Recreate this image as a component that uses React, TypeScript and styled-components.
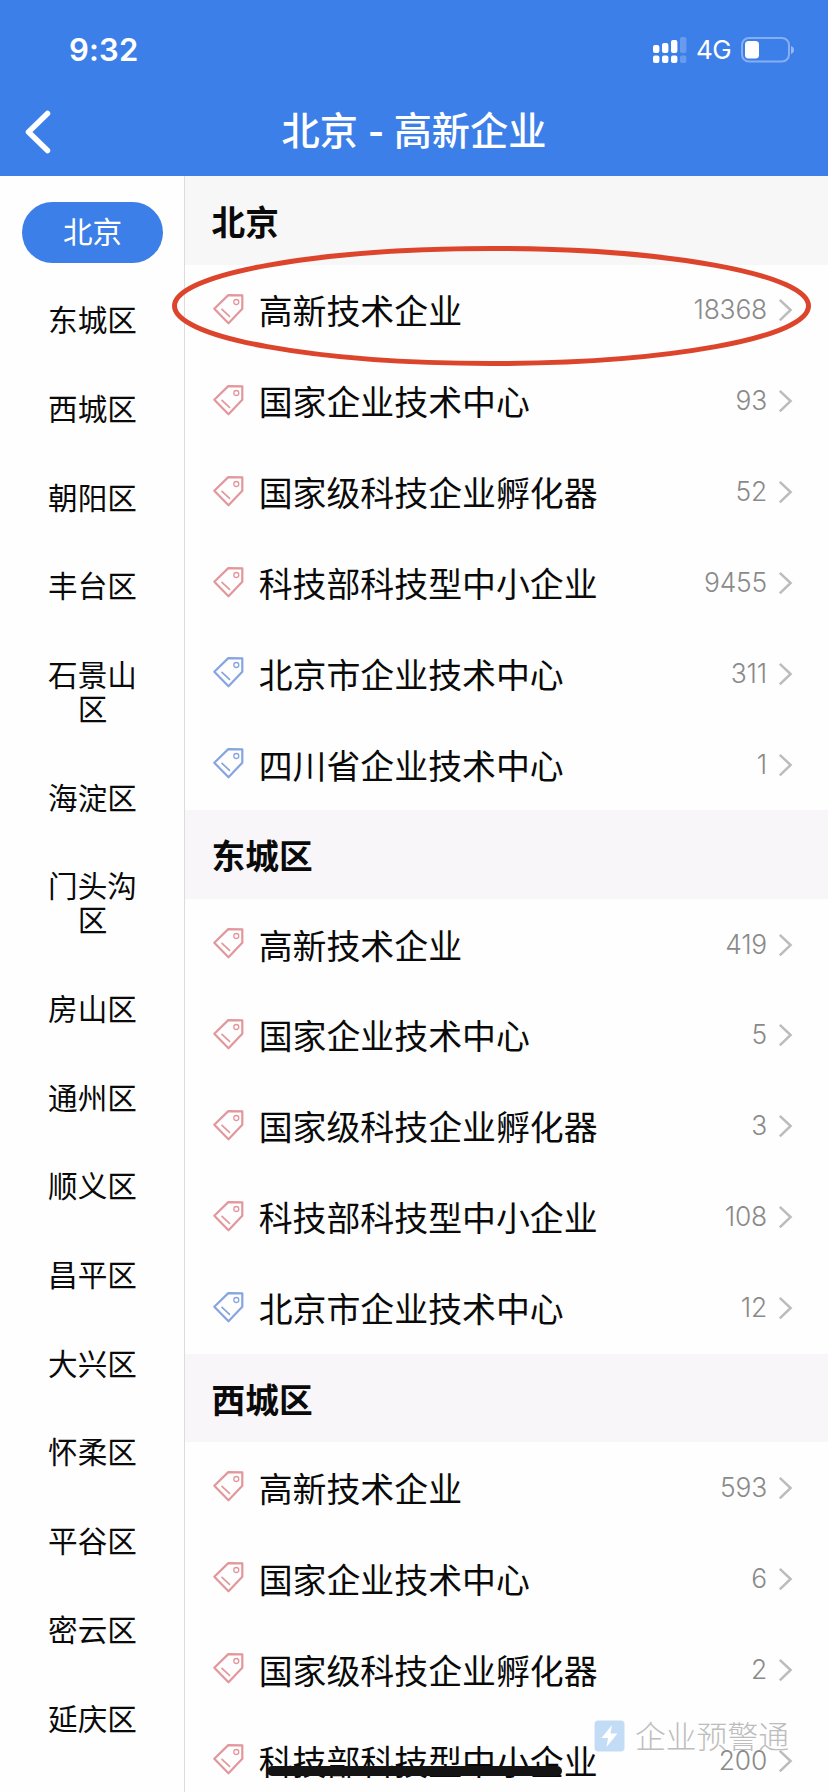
import React from 'react';
import styled, { createGlobalStyle } from 'styled-components';

const GlobalStyle = createGlobalStyle`
  *, *::before, *::after { box-sizing: border-box; }
  html, body { margin: 0; padding: 0; background: #fefefe; overflow: hidden; }
  body { font-family: Inter, "Noto Sans CJK SC", sans-serif; color: #0a0a0a; }
`;

const Screen = styled.div`
  position: relative;
  display: flex;
  flex-direction: column;
  width: 828px;
  height: 1792px;
  overflow: hidden;
  background: #fefefe;
`;

const TopBar = styled.header`
  flex: none;
  height: 176px;
  background: #3d7fe8;
  color: #fff;
`;

const StatusBar = styled.div`
  display: flex;
  align-items: center;
  justify-content: space-between;
  height: 88px;
  padding: 11px 34px 0 69px;
`;

const Clock = styled.span`
  font-size: 31px;
  font-weight: 600;
  line-height: 40px;
  letter-spacing: 0.2px;
`;

const StatusIcons = styled.div`
  display: flex;
  align-items: center;
`;

const Network = styled.span`
  width: 35px;
  margin: 0 10px 0 9px;
  font-size: 26px;
  line-height: 32px;
  letter-spacing: -0.6px;
`;

const NavBar = styled.div`
  display: grid;
  grid-template-columns: 80px 1fr 80px;
  align-items: center;
  height: 88px;
`;

const BackButton = styled.button`
  display: flex;
  padding: 0 0 0 22px;
  border: 0;
  background: none;
  color: inherit;
`;

const Title = styled.h1`
  margin: 0;
  padding-bottom: 6px;
  font-family: "Noto Sans CJK SC", sans-serif;
  font-size: 38.2px;
  font-weight: 500;
  line-height: 56px;
  word-spacing: 1.2px;
  text-align: center;
  white-space: pre;
`;

const Dash = styled.span`
  display: inline-block;
  margin: 0 1px;
  font-weight: 700;
  transform: scaleX(1.1);
`;

const Body = styled.div`
  flex: 1;
  display: flex;
  min-height: 0;
`;

const Sidebar = styled.nav`
  flex: none;
  display: flex;
  flex-direction: column;
  width: 185px;
  padding-top: 12px;
  border-right: 1px solid #dcdcde;
`;

const District = styled.a<{ $active?: boolean }>`
  flex: none;
  display: flex;
  align-items: center;
  justify-content: center;
  width: 141px;
  margin: 14px 0 14px 22px;
  padding: 11.5px 22px 15.2px;
  border-radius: 31px;
  font-family: "Noto Sans CJK SC", sans-serif;
  font-size: 29.6px;
  line-height: 34px;
  text-align: center;
  background: ${p => (p.$active ? '#3d7fe8' : 'transparent')};
  color: ${p => (p.$active ? '#fff' : '#0a0a0a')};
`;

const DistrictLabel = styled.span`
  width: 92px;
`;

const Content = styled.main`
  flex: 1;
  min-width: 0;
`;

const GroupHeader = styled.h2<{ $tint: string }>`
  display: flex;
  align-items: center;
  height: 88.9px;
  margin: 0;
  padding: 0 0 0 26.5px;
  font-family: "Noto Sans CJK SC", sans-serif;
  font-size: 33.7px;
  font-weight: 700;
  background: ${p => p.$tint};
`;

const Row = styled.div`
  display: flex;
  align-items: center;
  height: 90.9px;
  padding: 0 35px 0 26.5px;
`;

const RowLabel = styled.span`
  flex: 1;
  margin-left: 15.2px;
  font-family: "Noto Sans CJK SC", sans-serif;
  font-size: 33.9px;
  line-height: 50px;
`;

const Count = styled.span`
  margin-right: 11px;
  padding-bottom: 2px;
  font-size: 26.4px;
  font-weight: 300;
  color: #8a8a8a;
  letter-spacing: -0.2px;
`;

const Highlight = styled.svg`
  position: absolute;
  left: 168px;
  top: 242px;
`;

const Watermark = styled.div`
  position: absolute;
  left: 594px;
  top: 1712px;
  display: flex;
  align-items: center;
  gap: 10px;
  height: 48px;
  font-family: "Noto Sans CJK SC", sans-serif;
  font-size: 30.8px;
  font-weight: 300;
  line-height: 30px;
  color: #bdbdbd;
`;

const WatermarkLabel = styled.span`
  padding-bottom: 3px;
`;

const HomeIndicator = styled.div`
  position: absolute;
  left: 267px;
  top: 1766px;
  width: 295px;
  height: 10px;
  border-radius: 5px;
  background: #141414;
`;

const SignalIcon = () => {
  const tops = [9, 7, 4, 1];
  return (
    <svg width="34" height="28" viewBox="0 0 34 28" fill="#fff">
      {tops.map((top, i) => (
        <g key={top} opacity={i === 3 ? 0.22 : 1}>
          <rect x={i * 9} y={top} width="6.400" height={17 - top} rx="2" />
          <rect x={i * 9} y="19.500" width="6.400" height="7.500" rx="2" />
        </g>
      ))}
    </svg>
  );
};

const BatteryIcon = () => (
  <svg width="53" height="26" viewBox="0 0 53 26" fill="none">
    <rect x="1" y="1" width="47" height="23.6" rx="7" stroke="#fff" strokeOpacity="0.38" strokeWidth="2" />
    <rect x="4" y="4" width="14" height="17.5" rx="3.5" fill="#fff" />
    <path d="M50 9v8c2-.7 3-2.200 3-4s-1-3.300-3-4z" fill="#fff" fillOpacity="0.45" />
  </svg>
);

const TagSvg = styled.svg`
  flex: none;
  margin-bottom: 3px;
`;

const TagIcon = ({ color }: { color: string }) => (
  <TagSvg width="32" height="34" viewBox="0 0 32 34" fill="none" stroke={color} strokeLinejoin="round" strokeLinecap="round">
    <path d="M2.300 16.800 16.300 3.100 30.300 3.400V16.700L16.500 31.300Z" strokeWidth="2.200" />
    <circle cx="24.300" cy="10" r="2.500" strokeWidth="1.300" />
    <path d="M10 17.300 17.500 24.300" strokeWidth="1.700" />
  </TagSvg>
);

const ChevronIcon = () => (
  <svg width="15" height="24" viewBox="0 0 15 24" fill="none" stroke="#bcbcbc" strokeWidth="2.500">
    <path d="M1.800 1.800 12.600 12 1.800 22.300" />
  </svg>
);

const RED = '#e2979b';
const BLUE = '#86a5e0';

const districts = [
  '北京', '东城区', '西城区', '朝阳区', '丰台区', '石景山区', '海淀区', '门头沟区', '房山区',
  '通州区', '顺义区', '昌平区', '大兴区', '怀柔区', '平谷区', '密云区', '延庆区',
];

const groups: { name: string; tint: string; items: [string, number, string][] }[] = [
  {
    name: '北京',
    tint: '#f7f7f7',
    items: [
      ['高新技术企业', 18368, RED],
      ['国家企业技术中心', 93, RED],
      ['国家级科技企业孵化器', 52, RED],
      ['科技部科技型中小企业', 9455, RED],
      ['北京市企业技术中心', 311, BLUE],
      ['四川省企业技术中心', 1, BLUE],
    ],
  },
  {
    name: '东城区',
    tint: '#f8f6f9',
    items: [
      ['高新技术企业', 419, RED],
      ['国家企业技术中心', 5, RED],
      ['国家级科技企业孵化器', 3, RED],
      ['科技部科技型中小企业', 108, RED],
      ['北京市企业技术中心', 12, BLUE],
    ],
  },
  {
    name: '西城区',
    tint: '#f8f6f9',
    items: [
      ['高新技术企业', 593, RED],
      ['国家企业技术中心', 6, RED],
      ['国家级科技企业孵化器', 2, RED],
      ['科技部科技型中小企业', 200, RED],
    ],
  },
];

export default function App() {
  return (
    <Screen>
      <GlobalStyle />
      <TopBar>
        <StatusBar>
          <Clock>9:32</Clock>
          <StatusIcons>
            <SignalIcon />
            <Network>4G</Network>
            <BatteryIcon />
          </StatusIcons>
        </StatusBar>
        <NavBar>
          <BackButton aria-label="返回">
            <svg width="32" height="48" viewBox="0 0 32 48" fill="none" stroke="#fff" strokeWidth="5.500" strokeLinecap="round" strokeLinejoin="round">
              <path d="M25.500 5.500 6.500 24 25.500 42.500" />
            </svg>
          </BackButton>
          <Title>北京 <Dash>-</Dash> 高新企业</Title>
        </NavBar>
      </TopBar>
      <Body>
        <Sidebar>
          {districts.map((name, i) => (
            <District key={name} $active={i === 0}>
              <DistrictLabel>{name}</DistrictLabel>
            </District>
          ))}
        </Sidebar>
        <Content>
          {groups.map(group => (
            <section key={group.name}>
              <GroupHeader $tint={group.tint}>{group.name}</GroupHeader>
              {group.items.map(([label, count, color]) => (
                <Row key={label}>
                  <TagIcon color={color} />
                  <RowLabel>{label}</RowLabel>
                  <Count>{count}</Count>
                  <ChevronIcon />
                </Row>
              ))}
            </section>
          ))}
        </Content>
      </Body>
      <Highlight width="648" height="128" viewBox="0 0 648 128" fill="none">
        <ellipse cx="323.500" cy="64" rx="317" ry="57.500" stroke="#dc452c" strokeWidth="5" />
      </Highlight>
      <Watermark>
        <svg width="31" height="32" viewBox="0 0 31 32">
          <rect x="0.500" y="0.500" width="30" height="31" rx="4" fill="#c3dcf5" />
          <path d="M18 5 7.500 18H14L12.500 27 23.500 13.500H16.500Z" fill="#fff" />
        </svg>
        <WatermarkLabel>企业预警通</WatermarkLabel>
      </Watermark>
      <HomeIndicator />
    </Screen>
  );
}
